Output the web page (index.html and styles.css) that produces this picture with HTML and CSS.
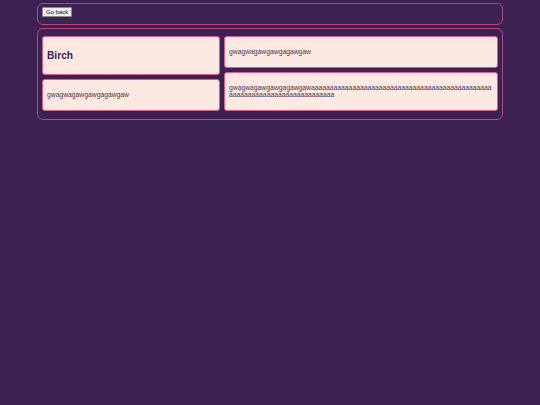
FILE: index.html
```html
<!DOCTYPE html>
<html>
<head>
<meta charset="utf-8">
<link rel="stylesheet" href="styles.css">
</head>
<body>
<div class="page">
  <div class="panel top">
    <button class="back">Go back</button>
  </div>
  <div class="panel main">
    <div class="col left">
      <div class="card tall"><h2 class="title">Birch</h2></div>
      <div class="card short"><p class="txt">gwagwagawgawgagawgaw</p></div>
    </div>
    <div class="col right">
      <div class="card short"><p class="txt">gwagwagawgawgagawgaw</p></div>
      <div class="card tall"><p class="txt wrap">gwagwagawgawgagawgawaaaaaaaaaaaaaaaaaaaaaaaaaaaaaaaaaaaaaaaaaaaaaaaaaaaaaaaaaaaaaaaaaaaaaaaaaaaa</p></div>
    </div>
  </div>
</div>
</body>
</html>
```
FILE: styles.css
```css
html, body {
  margin: 0;
  padding: 0;
  background: #3c2152;
  height: 100%;
}
body {
  font-family: "Liberation Sans", Arial, sans-serif;
}
.page {
  width: 466px;
  margin-left: 37px;
  padding-top: 3px;
}
.panel {
  box-sizing: border-box;
  border: 1px solid #b4487f;
  border-radius: 6px;
}
.top {
  height: 22px;
  padding: 3px 4px;
}
.back {
  display: block;
  height: 10px;
  padding: 0 3px;
  margin: 0;
  font-family: "Liberation Sans", Arial, sans-serif;
  font-size: 6px;
  line-height: 8px;
  color: #111;
  background: #efefef;
  border: 1px solid #8a8a8a;
  border-radius: 1px;
}
.main {
  margin-top: 3px;
  height: 92px;
  padding: 7px 4px 8px;
  display: flex;
  gap: 4px;
}
.col {
  display: flex;
  flex-direction: column;
  gap: 4px;
}
.left { width: 178px; }
.right { width: 274px; }
.card {
  box-sizing: border-box;
  background: #fde9e2;
  border: 1px solid #dd5d88;
  border-radius: 3px;
  padding: 0 4px;
  display: flex;
  align-items: center;
}
.tall { height: 39px; }
.short { height: 32px; }
.title {
  margin: 0;
  font-size: 10.2px;
  font-weight: bold;
  color: #3c2152;
}
.txt {
  margin: 0;
  font-size: 6.77px;
  line-height: 7.5px;
  color: #4a3650;
}
.wrap {
  word-break: break-all;
  margin-top: -1px;
}
```
